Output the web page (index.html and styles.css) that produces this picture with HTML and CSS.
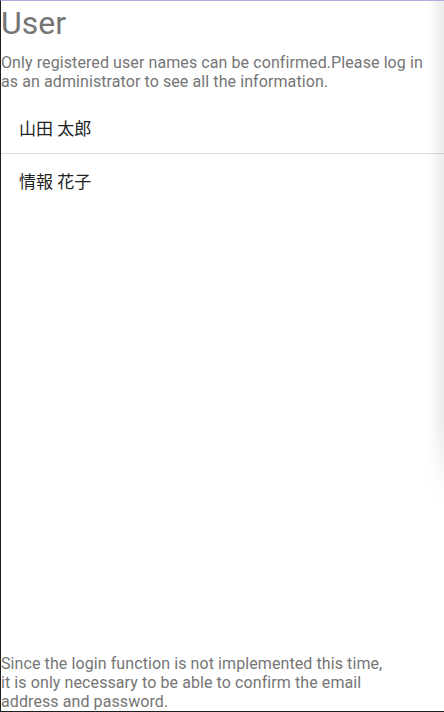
FILE: index.html
```html
<!DOCTYPE html>
<html lang="ja">
<head>
    <meta charset="UTF-8">
    <meta name="viewport" content="width=device-width, initial-scale=1.0">
    <title>User</title>
    <link rel="stylesheet" href="styles.css">
</head>
<body>

<div class="page">
    <div class="edge-shadow"></div>
    <h1>User</h1>
    <p class="note">Only registered user names can be confirmed.Please log in as an administrator to see all the information.</p>

    <ul class="user-list">
        <li>山田 太郎</li>
        <li>情報 花子</li>
    </ul>

    <p class="footer">Since the login function is not implemented this time,<br>it is only necessary to be able to confirm the email<br>address and password.</p>
</div>

</body>
</html>
```

FILE: styles.css
```css
* {
    box-sizing: border-box;
}
body {
    margin: 0;
    font-family: Roboto, "Noto Sans CJK JP", sans-serif;
    background: #fff;
}
.page {
    position: relative;
    height: 712px;
    display: flex;
    flex-direction: column;
    border-left: 1px solid #1e1e1e;
    border-top: 1px solid #b4a9e2;
    border-bottom: 1px solid #1e1e1e;
    overflow: hidden;
}
.edge-shadow {
    position: absolute;
    top: 0;
    right: 0;
    width: 16px;
    height: 500px;
    background: linear-gradient(to right, rgba(0, 0, 0, 0), rgba(0, 0, 0, 0.08));
    -webkit-mask-image: linear-gradient(to bottom, #000 85%, transparent);
    mask-image: linear-gradient(to bottom, #000 85%, transparent);
}
h1 {
    margin: 3px 0 0;
    font-size: 32px;
    font-weight: 400;
    line-height: 38px;
    color: #757575;
}
.note {
    margin: 11px 14px 0 0;
    font-size: 16px;
    line-height: 19px;
    letter-spacing: 0.09px;
    color: #757575;
}
.user-list {
    list-style-type: none;
    margin: 10px 0 0;
    padding: 0;
}
.user-list li {
    display: flex;
    align-items: center;
    height: 52px;
    padding-left: 18px;
    font-size: 17px;
    color: #222;
}
.user-list li + li {
    border-top: 1px solid #dedede;
    height: 54px;
}
.footer {
    margin: auto 0 0;
    font-size: 16px;
    line-height: 19px;
    letter-spacing: 0.09px;
    color: #757575;
}
```
